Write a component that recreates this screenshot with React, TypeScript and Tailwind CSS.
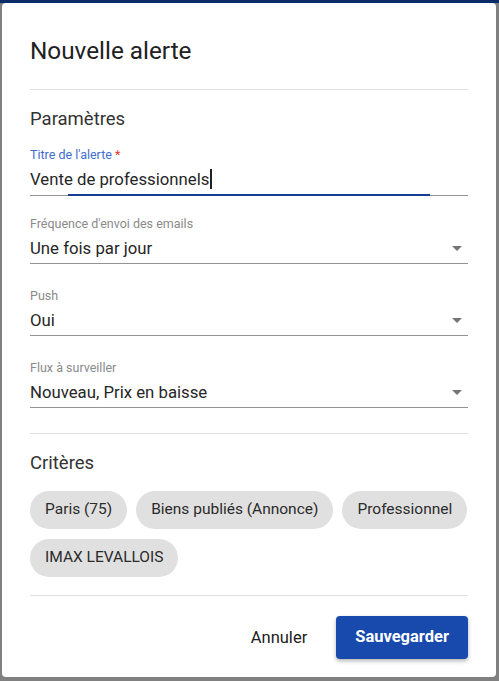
const font = { fontFamily: 'Roboto, "Liberation Sans", sans-serif' }

function Caret() {
  return (
    <svg width="10" height="5" viewBox="0 0 10 5" className="shrink-0 mr-[6px]" aria-hidden>
      <path d="M0 0 L5 5 L10 0 Z" fill="#757575" />
    </svg>
  )
}

function SelectField({ label, value, className }: { label: string; value: string; className?: string }) {
  return (
    <div className={className}>
      <div className="text-[12.5px] leading-[16px] text-[#8a8a8a]">{label}</div>
      <div className="mt-[4px] flex items-center justify-between">
        <span className="text-[16.75px] leading-[24px] text-[#262626]">{value}</span>
        <Caret />
      </div>
      <div className="mt-[3px] h-px bg-[#949494]" />
    </div>
  )
}

const criteria = ['Paris (75)', 'Biens publiés (Annonce)', 'Professionnel', 'IMAX LEVALLOIS']

export default function App() {
  return (
    <div className="w-[499px] h-[681px] bg-[#808080] overflow-hidden" style={font}>
      <div className="h-[3px] bg-[#0c2b69]" />
      <div className="ml-[2px] w-[494px] h-[674px] bg-white rounded-[4px] px-[28px] pt-[32px]">
        <h2 className="text-[24.3px] leading-[32px] text-[#212121]">Nouvelle alerte</h2>
        <div className="mt-[22px] h-px bg-[#e0e0e0]" />

        <h3 className="mt-[17px] text-[18.5px] leading-[24px] text-[#333333]">Paramètres</h3>

        <div className="mt-[16px]">
          <div className="text-[12.5px] leading-[16px] text-[#3f6cd0]">
            Titre de l'alerte <span className="text-[#e53935]">*</span>
          </div>
          <div className="mt-[4px] flex items-center text-[16.75px] leading-[24px] text-[#262626]">
            Vente de professionnels
            <span className="ml-px w-[2px] h-[20px] bg-[#212121]" />
          </div>
          <div className="relative mt-[4px] h-px bg-[#949494]">
            <div className="absolute left-[38px] w-[362px] top-[-1px] h-[2px] bg-[#163f94]" />
          </div>
        </div>

        <SelectField className="mt-[20px]" label="Fréquence d'envoi des emails" value="Une fois par jour" />
        <SelectField className="mt-[24px]" label="Push" value="Oui" />
        <SelectField className="mt-[24px]" label="Flux à surveiller" value="Nouveau, Prix en baisse" />

        <div className="mt-[25px] h-px bg-[#e0e0e0]" />

        <h3 className="mt-[17px] text-[18.5px] leading-[24px] text-[#333333]">Critères</h3>

        <div className="mt-[16px] flex flex-wrap gap-x-[9px] gap-y-[10px]">
          {criteria.map((c) => (
            <span
              key={c}
              className="h-[38px] px-[15px] flex items-center rounded-full bg-[#e0e0e0] text-[15.5px] text-[#2b2b2b] whitespace-nowrap"
            >
              {c}
            </span>
          ))}
        </div>

        <div className="mt-[18px] h-px bg-[#e0e0e0]" />

        <div className="mt-[20px] flex items-center justify-end">
          <button className="px-[8px] text-[16.5px] leading-[24px] text-[#212121]">Annuler</button>
          <button className="ml-[21px] h-[43px] px-[19px] rounded-[4px] bg-[#1849ad] text-white text-[16.5px] font-bold shadow-[0_2px_4px_rgba(0,0,0,0.3)]">
            Sauvegarder
          </button>
        </div>
      </div>
    </div>
  )
}
